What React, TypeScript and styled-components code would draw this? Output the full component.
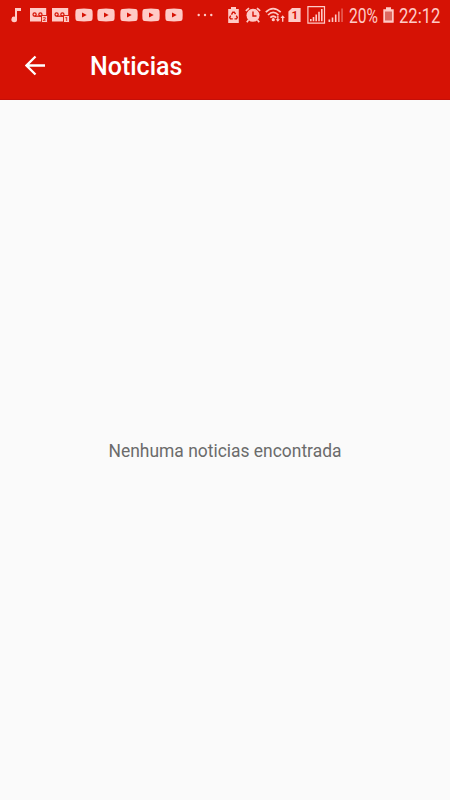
import React from 'react';
import styled, { createGlobalStyle } from 'styled-components';

const ink = '#ffcac6';
const red = '#d61205';

const GlobalStyle = createGlobalStyle`
  body { margin: 0; background: #fafafa; }
  * { box-sizing: border-box; }
`;
const Screen = styled.div`
  width: 100%;
  height: 100vh;
  display: flex;
  flex-direction: column;
  background: #fafafa;
  font-family: Roboto, sans-serif;
`;
const StatusBar = styled.header`
  height: 30px;
  flex: none;
  display: flex;
  align-items: center;
  justify-content: space-between;
  padding: 0 10px 0 11px;
  background: ${red};
  color: ${ink};
`;
const StatusGroup = styled.div`
  display: flex;
  align-items: center;
`;
const Glyph = styled.svg<{ $gap?: number }>`
  display: block;
  flex: none;
  margin-left: ${({ $gap = 0 }) => $gap}px;
  fill: currentColor;
`;
const StatusText = styled.span<{ $width: number; $gap: number; $scale: number }>`
  display: block;
  width: ${({ $width }) => $width}px;
  margin-left: ${({ $gap }) => $gap}px;
  font-size: 19.3px;
  line-height: 30px;
  font-weight: 400;
  white-space: nowrap;
  transform: translateY(2px) scaleX(${({ $scale }) => $scale});
  transform-origin: left center;
`;
const AppBar = styled.nav`
  height: 70px;
  flex: none;
  display: flex;
  align-items: center;
  padding-left: 25px;
  background: ${red};
  border-bottom: 1px solid #c50e08;
  color: #fff;
`;
const BackButton = styled.button`
  width: 65px;
  padding: 1px 0 0;
  border: 0;
  background: none;
  color: inherit;
`;
const Title = styled.h1`
  margin: 4px 0 0;
  font-size: 25px;
  line-height: 30px;
  font-weight: 500;
`;
const Content = styled.main`
  flex: 1;
  display: flex;
  align-items: center;
  justify-content: center;
`;
const EmptyMessage = styled.p`
  margin: 1px 0 0;
  font-size: 17.45px;
  line-height: 24px;
  color: #6b6b6b;
  white-space: nowrap;
`;

const MusicIcon = () => (
  <Glyph width="11" height="16" viewBox="0 0 11 16">
    <path d="M4 1h6v3H6v8.2A2.8 2.8 0 1 1 4 9.8z" />
  </Glyph>
);

const VoicemailIcon = ({ line, gap }: { line: string; gap: number }) => (
  <Glyph $gap={gap} width="18" height="16" viewBox="0 0 18 16">
    <path d="M0 1h16.2v13.5H0z" />
    <g fill="none" stroke={red} strokeWidth="1.2">
      <circle cx="4.600" cy="7.500" r="1.600" />
      <circle cx="10.400" cy="7.500" r="1.600" />
      <path d="M4.600 9.200h6.400" />
    </g>
    <path d="M11.500 8.500h6v7h-6z" stroke={red} strokeWidth=".9" />
    <text x="14.600" y="14.300" textAnchor="middle" fontFamily="Roboto" fontSize="6" fontWeight="700" fill={red}>{line}</text>
  </Glyph>
);

const VideoIcon = ({ gap }: { gap: number }) => (
  <Glyph $gap={gap} width="18" height="14" viewBox="0 0 18 14">
    <path d="M2.5.9Q9 .2 15.5.9 17.3 1 17.5 3q.4 4 0 8-.2 2-2 2.100-6.500.6-13 0Q.7 13 .5 11q-.4-4 0-8Q.7 1 2.500.9z" />
    <path d="M7 4.400v5.200l4.700-2.600z" fill={red} />
  </Glyph>
);

const MoreIcon = () => (
  <Glyph $gap={14} width="16" height="4" viewBox="0 0 16 4">
    <circle cx="1.700" cy="2" r="1.200" />
    <circle cx="8" cy="2" r="1.200" />
    <circle cx="14.300" cy="2" r="1.200" />
  </Glyph>
);

const RecycleBatteryIcon = () => (
  <Glyph width="11" height="16" viewBox="0 0 11 16">
    <path d="M3 0h5v2h2.800v14H.2V2H3z" />
    <g fill="none" stroke={red} strokeWidth="1.400">
      <path d="M3.500 7.600l1.300-2.400h1.500l1.200 2M8.300 8.700l1 1.800-.8 1.400H6.500M4.800 11.900H2.500l-.8-1.400 1-1.800" />
    </g>
  </Glyph>
);

const AlarmIcon = () => (
  <Glyph $gap={6} width="16" height="16" viewBox="0 0 16 16">
    <circle cx="8" cy="8.300" r="6.500" />
    <path d="M.8 3.800L4 1.100M12 1.100l3.200 2.700M3.500 13l-1.700 2.200M12.500 13l1.700 2.200" stroke={ink} strokeWidth="1.700" />
    <path d="M8 4.500V9h3.500" fill="none" stroke={red} strokeWidth="1.400" />
  </Glyph>
);

const WifiIcon = () => (
  <Glyph $gap={4} width="20" height="16" viewBox="0 0 20 16">
    <g fill="none" stroke={ink} strokeWidth="1.700">
      <path d="M.8 5.200Q8 -2 15.700 5.200M3 8Q8.200 2.800 13.500 8M5.300 10.700Q8.200 7.800 11.200 10.700" />
    </g>
    <circle cx="8.300" cy="12.700" r="1.600" />
    <path d="M12.200 8.500h1.300v3.800H15l-2.200 2.500-2.100-2.500h1.500zM17 14.800v-3.900h-1.500l2.200-2.600 2.200 2.600h-1.500v3.900z" />
  </Glyph>
);

const SimIcon = () => (
  <Glyph $gap={3} width="13" height="16" viewBox="0 0 13 16">
    <path d="M4 1h8.600v14H.4V4.500z" />
    <text x="6.700" y="12.200" textAnchor="middle" fontFamily="Roboto" fontSize="11.500" fontWeight="700" fill={red}>1</text>
  </Glyph>
);

const BoxedSignalIcon = () => (
  <Glyph $gap={6} width="19" height="18" viewBox="0 0 19 18">
    <path d="M.9.7h16.600v16.500H.9z" fill="none" stroke={ink} strokeWidth="1.200" />
    <path d="M3 13h1.600v2.300H3zM5.700 11h1.600v4.300H5.700zM8.400 8.500H10v6.800H8.400zM11.200 5.700h1.600v9.600h-1.600zM14 3h1.600v12.300H14z" />
  </Glyph>
);

const SignalIcon = () => (
  <Glyph $gap={2} width="16" height="16" viewBox="0 0 16 16">
    <path d="M.5 12.500h1.700V15H.5zM3.700 10.500h1.600V15H3.700zM6.900 7.500h1.600V15H6.900z" />
    <path d="M10.100 4.500h1.500V15h-1.500z" opacity=".8" />
    <path d="M13.300 1.500h1.500V15h-1.500z" opacity=".45" />
  </Glyph>
);

const BatteryIcon = () => (
  <Glyph $gap={5} width="11" height="16" viewBox="0 0 11 16">
    <path d="M3 .3h5v2h2.700v13.500H.3V2.300H3z" />
    <path d="M2 4.500h7v9H2z" fill="#dc6961" />
  </Glyph>
);

const App = () => (
  <>
    <GlobalStyle />
    <Screen>
      <StatusBar>
        <StatusGroup>
          <MusicIcon />
          <VoicemailIcon line="2" gap={8} />
          <VoicemailIcon line="1" gap={4} />
          <VideoIcon gap={5} />
          <VideoIcon gap={4} />
          <VideoIcon gap={5} />
          <VideoIcon gap={4} />
          <VideoIcon gap={5} />
          <MoreIcon />
        </StatusGroup>
        <StatusGroup>
          <RecycleBatteryIcon />
          <AlarmIcon />
          <WifiIcon />
          <SimIcon />
          <BoxedSignalIcon />
          <SignalIcon />
          <StatusText $width={29} $gap={5} $scale={0.81}>20%</StatusText>
          <BatteryIcon />
          <StatusText $width={41} $gap={5} $scale={0.86}>22:12</StatusText>
        </StatusGroup>
      </StatusBar>
      <AppBar>
        <BackButton aria-label="Voltar">
          <Glyph width="21" height="21" viewBox="0 0 21 21">
            <path d="M20 10.500H2M10.500 1.500l-9 9 9 9" fill="none" stroke="currentColor" strokeWidth="2.300" />
          </Glyph>
        </BackButton>
        <Title>Noticias</Title>
      </AppBar>
      <Content>
        <EmptyMessage>Nenhuma noticias encontrada</EmptyMessage>
      </Content>
    </Screen>
  </>
);

export default App;
